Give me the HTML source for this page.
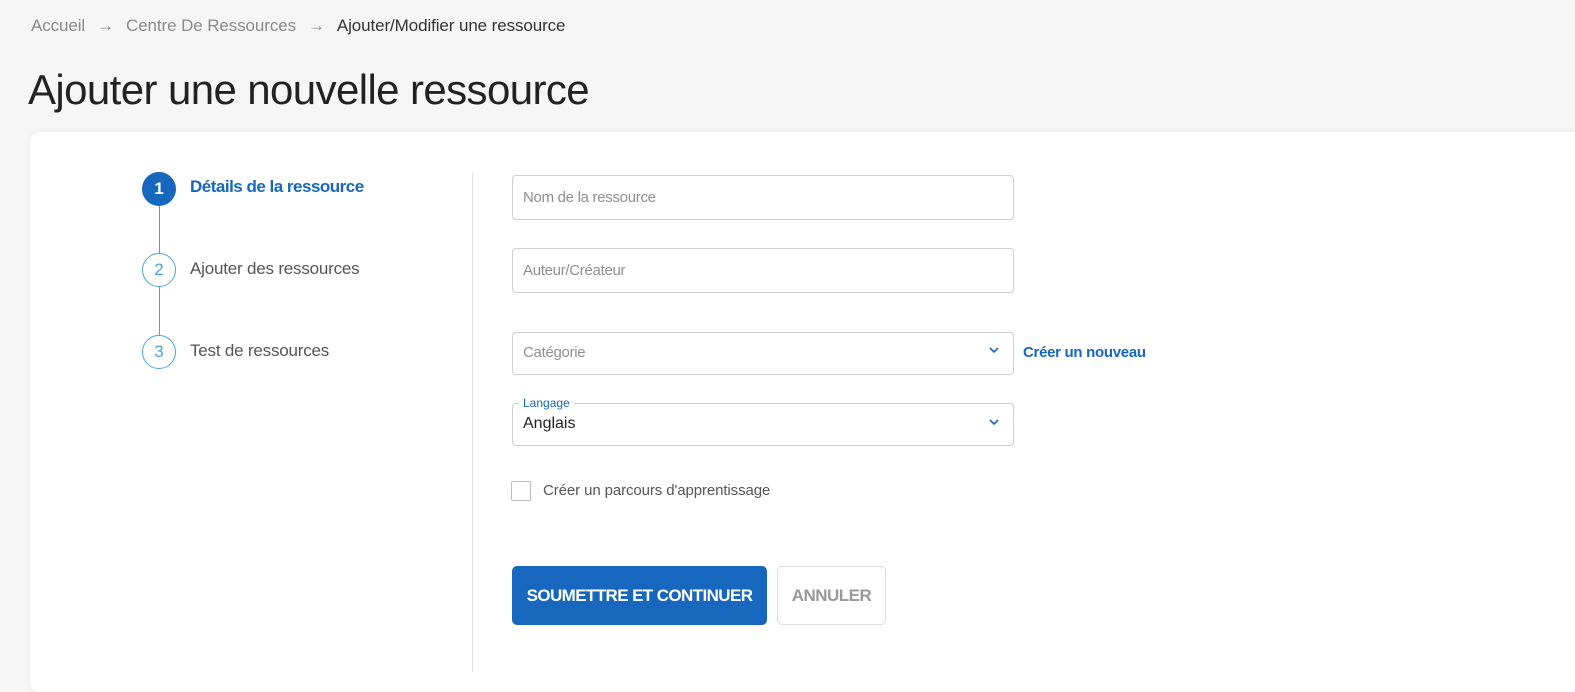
<!DOCTYPE html>
<html><head><meta charset="utf-8"><style>
body{margin:0;width:1575px;height:663px;overflow:hidden;background:#f6f6f6;font-family:"Liberation Sans",sans-serif;position:relative}
.a{position:absolute;white-space:nowrap}
.bc{top:16px;left:31px;font-size:17px;color:#8a8a8a;letter-spacing:-0.1px}
.bc span.ar{margin:0 12px;color:#888}
.bc b{font-weight:normal;color:#333}
h1{position:absolute;margin:0;left:28px;top:66px;font-size:42px;font-weight:normal;color:#222;letter-spacing:-0.6px}
.card{position:absolute;left:30px;top:132px;width:1560px;height:560px;background:#fff;border-radius:10px;box-shadow:0 0 6px rgba(0,0,0,.06)}
.div{left:472px;top:172px;width:1px;height:500px;background:#e2e2e2}
.c{width:34px;height:34px;border-radius:50%;box-sizing:border-box;border:1px solid #4aa3dc;color:#4aa3dc;text-align:center;line-height:32px;font-size:17px;left:142px}
.c.on{background:#1767be;border-color:#1767be;color:#fff;font-weight:bold}
.vl{left:159px;width:1px;background:#4aa3dc}
.st{left:190px;font-size:17px;color:#555;letter-spacing:-0.2px}
.in{left:512px;width:500px;height:43px;border:1px solid #cfcfcf;border-radius:4px;background:#fff}
.ph{left:523px;font-size:15px;color:#8f8f8f;letter-spacing:-0.3px}
.chev{left:988px}
.btn{top:566px;left:512px;width:255px;height:59px;background:#1767be;border-radius:5px;color:#fff;font-weight:bold;font-size:17px;text-align:center;line-height:59px;letter-spacing:-0.6px}
.btn2{top:566px;left:777px;width:107px;height:57px;border:1px solid #ddd;border-radius:5px;color:#999;font-weight:bold;font-size:17px;text-align:center;line-height:57px;letter-spacing:-0.5px}
</style></head><body>
<div class="a bc">Accueil<span class="ar">→</span>Centre De Ressources<span class="ar">→</span><b>Ajouter/Modifier une ressource</b></div>
<h1>Ajouter une nouvelle ressource</h1>
<div class="card"></div>
<div class="a div"></div>
<div class="a vl" style="top:205px;height:48px"></div>
<div class="a vl" style="top:287px;height:48px"></div>
<div class="a c on" style="top:172px">1</div>
<div class="a c" style="top:253px">2</div>
<div class="a c" style="top:335px">3</div>
<div class="a st" style="top:177px;color:#1767be;font-weight:bold;letter-spacing:-0.5px">Détails de la ressource</div>
<div class="a st" style="top:259px">Ajouter des ressources</div>
<div class="a st" style="top:341px">Test de ressources</div>
<div class="a in" style="top:175px"></div><div class="a ph" style="top:189px">Nom de la ressource</div>
<div class="a in" style="top:248px"></div><div class="a ph" style="top:262px">Auteur/Créateur</div>
<div class="a in" style="top:332px;height:41px"></div><div class="a ph" style="top:344px">Catégorie</div>
<svg class="a chev" style="top:346px" width="12" height="8"><path d="M2 2l4 4 4-4" stroke="#1767be" stroke-width="1.6" fill="none"/></svg>
<div class="a" style="left:1023px;top:344px;font-size:15px;font-weight:bold;color:#1767be;letter-spacing:-0.3px">Créer un nouveau</div>
<div class="a in" style="top:403px;height:41px"></div>
<div class="a" style="left:519px;top:396px;background:#fff;padding:0 4px;font-size:12px;color:#1767be">Langage</div>
<div class="a" style="left:523px;top:415px;font-size:16px;color:#222">Anglais</div>
<svg class="a chev" style="top:418px" width="12" height="8"><path d="M2 2l4 4 4-4" stroke="#1767be" stroke-width="1.6" fill="none"/></svg>
<div class="a" style="left:511px;top:481px;width:18px;height:18px;border:1px solid #bbb;border-radius:2px"></div>
<div class="a" style="left:543px;top:482px;font-size:15px;color:#555;letter-spacing:-0.1px">Créer un parcours d'apprentissage</div>
<div class="a btn">SOUMETTRE ET CONTINUER</div>
<div class="a btn2">ANNULER</div>
</body></html>
